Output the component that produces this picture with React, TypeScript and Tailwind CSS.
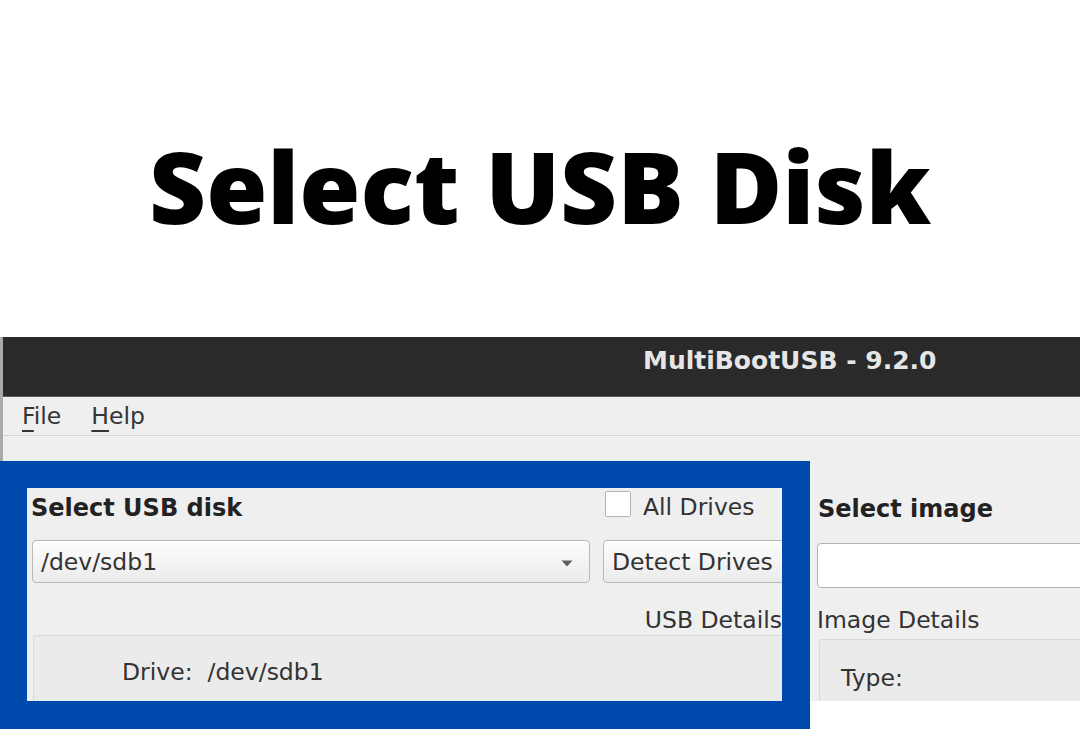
const UI_FONT = "font-['DejaVu_Sans',sans-serif]"

function ComboArrow() {
  return (
    <svg width="12" height="7" viewBox="0 0 12 7" className="shrink-0">
      <path d="M0.5 0.5 L11.5 0.5 L6 6.5 Z" fill="#5e5e5e" />
    </svg>
  )
}

function TitleBar() {
  return (
    <div className="h-[60px] bg-[#2b2a2a] border-b border-[#5c5c5c] flex items-center pb-[11px] pl-[640px]">
      <span className={`${UI_FONT} font-bold text-[25px] text-[#e6e6e6] whitespace-nowrap`}>
        MultiBootUSB - 9.2.0
      </span>
    </div>
  )
}

function MenuBar() {
  return (
    <>
      <div className={`${UI_FONT} h-[39px] bg-[#efefef] border-b border-[#d3d3d3] flex gap-[30px] pl-[19px] pt-[4px] text-[23.5px] leading-[30px] text-[#353535]`}>
        <span>
          <span className="underline decoration-2 underline-offset-[6px]">F</span>ile
        </span>
        <span>
          <span className="underline decoration-2 underline-offset-[6px]">H</span>elp
        </span>
      </div>
      <div className="h-[25px] bg-[#efefef]" />
    </>
  )
}

function UsbPanel() {
  return (
    <div className="w-[810px] h-[268px] shrink-0 border-[#004aad] border-l-[27px] border-t-[27px] border-r-[28px] border-b-[28px]">
      <div className={`${UI_FONT} h-full bg-[#efefef] overflow-hidden text-[#333] text-[23.5px]`}>
        {/* heading + checkbox */}
        <div className="flex items-start pt-[3px] h-[52px]">
          <span className="pl-[4px] pt-[2px] font-bold text-[24px] leading-[30px] text-[#222] w-[578px] shrink-0 whitespace-nowrap">Select USB disk</span>
          <span className="w-[26px] h-[26px] shrink-0 bg-white border border-[#b3b3b3] rounded-[2px]" />
          <span className="pl-[12px] pt-[1px] leading-[30px] whitespace-nowrap">All Drives</span>
        </div>

        {/* combo + detect button */}
        <div className="flex h-[43px] pl-[5px] gap-[13px]">
          <div className="w-[558px] shrink-0 h-full flex items-center justify-between pl-[8px] pr-[16px] pt-[3px] border border-[#b9b9b9] rounded-[4px] bg-gradient-to-b from-[#fdfdfd] to-[#ebebeb]">
            <span>/dev/sdb1</span>
            <ComboArrow />
          </div>
          <div className="w-[220px] shrink-0 h-full flex items-center pl-[8px] pt-[3px] border border-[#b9b9b9] rounded-[4px] bg-gradient-to-b from-[#fdfdfd] to-[#ebebeb] whitespace-nowrap">
            Detect Drives
          </div>
        </div>

        <div className="h-[22px]" />
        <div className="flex justify-end leading-[30px] whitespace-nowrap">USB Details</div>

        {/* details group */}
        <div className="ml-[6px] h-[80px] bg-[#ebebeb] border-t border-l border-[#d9d9d9] rounded-tl-[3px] pl-[88px] pt-[19px]">
          <span className="leading-[30px] whitespace-pre">Drive:  /dev/sdb1</span>
        </div>
      </div>
    </div>
  )
}

function ImagePanel() {
  return (
    <div className={`${UI_FONT} flex-1 h-[240px] bg-[#efefef] overflow-hidden text-[#333] text-[23.5px]`}>
      <div className="pl-[8px] pt-[33px] font-bold text-[24px] leading-[30px] text-[#222] whitespace-nowrap">Select image</div>
      <div className="h-[19px]" />
      <div className="ml-[7px] w-[320px] h-[45px] bg-white border border-[#b3b3b3] rounded-[4px]" />
      <div className="h-[17px]" />
      <div className="pl-[7px] leading-[30px] whitespace-nowrap">Image Details</div>
      <div className="h-[4px]" />
      <div className="ml-[9px] h-[80px] bg-[#ebebeb] border-t border-l border-[#d9d9d9] rounded-tl-[3px] pl-[21px] pt-[21px]">
        <span className="leading-[30px]">Type:</span>
      </div>
    </div>
  )
}

export default function App() {
  return (
    <div className="w-[1080px] h-[745px] bg-white overflow-hidden">
      <div className="h-[337px] pt-[136px] text-center">
        <h1 className="font-['Open_Sans',sans-serif] font-extrabold text-[99px] leading-none text-black whitespace-nowrap">
          Select USB Disk
        </h1>
      </div>

      <div className="border-l-[3px] border-[#a9a9a9]">
        <TitleBar />
        <MenuBar />
      </div>

      <div className="flex items-start">
        <UsbPanel />
        <ImagePanel />
      </div>
    </div>
  )
}
